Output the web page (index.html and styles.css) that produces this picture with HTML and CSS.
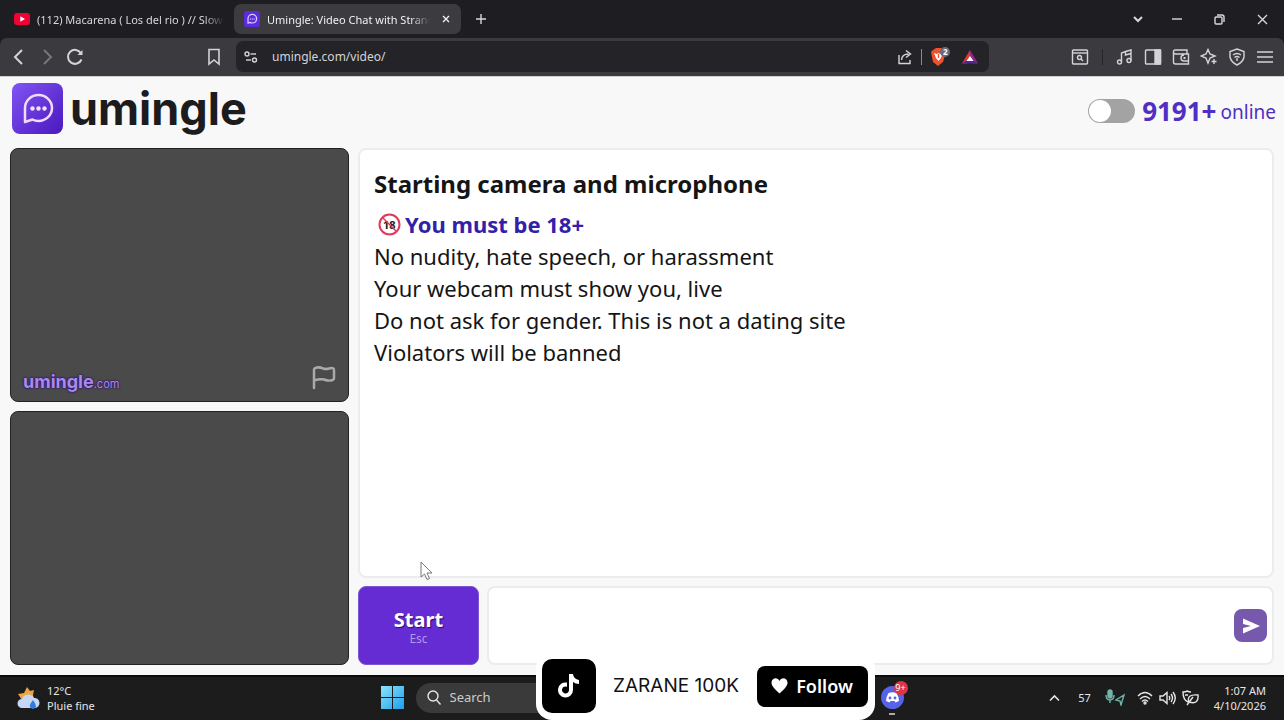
FILE: index.html
```html
<!DOCTYPE html>
<html lang="en">
<head>
  <meta charset="UTF-8" />
  <meta name="viewport" content="width=device-width, initial-scale=1.0"/>
  <title>Umingle: Video Chat with Strangers</title>
  <link rel="stylesheet" href="styles.css">
</head>
<body>
  <div class="tab-strip">
    <button class="tab">
      <svg width="16" height="12" viewBox="0 0 16 12"><rect width="16" height="12" rx="3" fill="#f00334"/><path d="M6.3 3.3v5.4L11 6z" fill="#fff"/></svg>
      <span class="tab-title">(112) Macarena ( Los del rio ) // Slowed</span>
    </button>
    <div class="tab active">
      <svg width="16" height="16" viewBox="0 0 52 52"><rect width="52" height="52" rx="9" fill="#5b2be0"/><path d="M13 40V25a14 14 0 1 1 14 14q-4 0-7-2z" fill="none" stroke="#dccfff" stroke-width="4" stroke-linejoin="round"/><path d="M19 26h16" stroke="#dccfff" stroke-width="4" stroke-dasharray="4 2"/></svg>
      <span class="tab-title">Umingle: Video Chat with Strangers</span>
      <button class="tab-close" aria-label="Close tab"><svg width="8" height="8" viewBox="0 0 8 8"><path d="M1 1l6 6M7 1L1 7"/></svg></button>
    </div>
    <button class="new-tab" aria-label="New tab"><svg width="10" height="10" viewBox="0 0 10 10"><path d="M5 0v10M0 5h10"/></svg></button>
    <div class="window-buttons">
      <button aria-label="Search tabs"><svg width="10" height="8" viewBox="0 0 10 8"><path d="M1 2l4 4 4-4" stroke-width="2"/></svg></button>
      <button aria-label="Minimize"><svg width="10" height="10" viewBox="0 0 10 10"><path d="M0 5h10"/></svg></button>
      <button aria-label="Restore"><svg width="11" height="11" viewBox="0 0 11 11"><rect x="1" y="3" width="7" height="7" rx="1"/><path d="M3 1h5q2 0 2 2v5"/></svg></button>
      <button aria-label="Close"><svg width="11" height="11" viewBox="0 0 11 11"><path d="M1 1l9 9M10 1l-9 9"/></svg></button>
    </div>
  </div>

  <div class="toolbar">
    <div class="nav-buttons">
      <button aria-label="Back"><svg width="18" height="18" viewBox="0 0 18 18"><path d="M12 2L5 9l7 7" stroke-width="2"/></svg></button>
      <button class="dim" aria-label="Forward"><svg width="18" height="18" viewBox="0 0 18 18"><path d="M6 2l7 7-7 7" stroke-width="2"/></svg></button>
      <button aria-label="Reload"><svg width="18" height="18" viewBox="0 0 18 18"><path d="M15.5 11.500A7 7 0 1 1 15 5.200" stroke-width="2"/><path d="M16.500 2v5h-5z" fill="currentColor" stroke="none"/></svg></button>
      <button class="bookmark" aria-label="Bookmark"><svg width="18" height="18" viewBox="0 0 18 18"><path d="M4 1.500h10v14.500l-5-4-5 4z" stroke-width="1.600"/></svg></button>
    </div>
    <div class="address">
      <svg width="14" height="14" viewBox="0 0 14 14"><circle cx="3" cy="4" r="2"/><path d="M6.500 4H12"/><circle cx="10.500" cy="10" r="2"/><path d="M2 10h5"/></svg>
      <input type="text" value="umingle.com/video/" aria-label="Address">
      <svg width="16" height="16" viewBox="0 0 16 16"><path d="M2 6v8.500h11V11M4.500 11q.5-6 7-6M9 1.500L13.500 5 9 8.500"/></svg>
      <span class="divider light"></span>
      <svg class="brave" width="20" height="22" viewBox="0 0 20 22"><path d="M3 4l3-2h5l3 2 2 2-3 10-5 4-5-4L1 6z" fill="#f0502b"/><path d="M4 7l3 1 1.500-1 1.500 1 3-1-2 5-2.500 3L6 12z" fill="#fff"/><path d="M8.500 8v4" stroke="#f0502b"/><circle cx="15" cy="6" r="5" fill="#676b7b"/><text x="13" y="9">2</text></svg>
      <svg class="bat" width="16" height="14" viewBox="0 0 16 14"><path d="M8 0L0 13.500h5L8 8z" fill="#e5362e"/><path d="M8 0l8 13.500h-5L8 8z" fill="#92278f"/><path d="M0 13.500h16l-5-3.500H5z" fill="#50268e"/><path d="M8 6l3.500 5h-7z" fill="#fff"/></svg>
    </div>
    <div class="extensions">
      <button aria-label="Search page"><svg width="18" height="18" viewBox="0 0 18 18"><rect x="1.500" y="2" width="15" height="14" rx="1"/><path d="M2 5h14"/><circle cx="8.500" cy="9.500" r="2"/><path d="M10 11l2 2"/></svg></button>
      <span class="divider"></span>
      <button aria-label="Playlist"><svg width="18" height="18" viewBox="0 0 18 18"><circle cx="3.500" cy="14" r="2"/><circle cx="13" cy="12.500" r="2"/><path d="M5.500 14V5l4-1.500V7L15 5.500M9.500 3.500L15 2v10.500"/></svg></button>
      <button aria-label="Sidebar"><svg width="18" height="18" viewBox="0 0 18 18"><rect x="1.500" y="2" width="15" height="14" rx="1"/><path d="M11 2h5.500v14H11z" fill="currentColor"/></svg></button>
      <button aria-label="Wallet"><svg width="18" height="18" viewBox="0 0 18 18"><path d="M15 6V2H3q-1.500 0-1.500 1.500V14q0 2 2 2h13v-3M1.500 4q0 2 2 2h13v7H12a3 3 0 0 1 0-6"/><path d="M11.500 10h2" stroke-width="2"/></svg></button>
      <button aria-label="Leo AI"><svg width="18" height="18" viewBox="0 0 18 18"><path d="M8 1.500l2 4.500 5 2-5 2-2 5-2-5-5-2 5-2zM14 11v5M11.500 13.500h5"/></svg></button>
      <button aria-label="VPN"><svg width="18" height="18" viewBox="0 0 18 18"><path d="M9 1l7 2.500V9q-1 5-7 8-6-3-7-8V3.500z"/><path d="M5 7q4-3 8 0M6.500 9.500q2.500-2 5 0M9 10v3"/></svg></button>
      <button aria-label="Menu"><svg width="18" height="18" viewBox="0 0 18 18"><path d="M1 4h16M1 9h16M1 14h16"/></svg></button>
    </div>
  </div>

  <div class="page">
    <header>
      <a href="#" class="logo">
        <svg width="51" height="51" viewBox="0 0 51 51">
          <defs><linearGradient id="logo-bg" x1="0" y1="0" x2="1" y2="1"><stop offset="0" stop-color="#8054f5"/><stop offset="1" stop-color="#4b18bd"/></linearGradient></defs>
          <rect width="51" height="51" rx="8" fill="url(#logo-bg)"/>
          <path d="M13 39V25a13.500 13 0 1 1 13.500 13q-3.500 0-6-1.500z" fill="none" stroke="#f3d9fb" stroke-width="2.500" stroke-linejoin="round"/>
          <g fill="#f3e0fb"><circle cx="20.500" cy="25.500" r="2.200"/><circle cx="26.500" cy="25.500" r="2.200"/><circle cx="32.500" cy="25.500" r="2.200"/></g>
        </svg>
        <span>umingle</span>
      </a>
      <label class="online" for="theme">
        <input type="checkbox" id="theme">
        <b>9191+</b>
        <span>online</span>
      </label>
    </header>

    <main>
      <div class="videos">
        <div class="video">
          <span class="watermark">umingle<small>.com</small></span>
          <button class="report" aria-label="Report"><svg width="26" height="26" viewBox="0 0 26 26"><path d="M3 23V5q0-2 3-2.500 3-.5 6 1 3 1 6 0 5-1.500 5 1.500v8q0 2-3 2.500-3 .5-7-1-4-1-10 1"/></svg></button>
        </div>
        <div class="video"></div>
      </div>

      <div class="chat">
        <div class="messages">
          <h2>Starting camera and microphone</h2>
          <p class="adult">
            <svg width="23" height="23" viewBox="0 0 23 23"><text x="5" y="16">18</text><circle cx="11.500" cy="11.500" r="10"/><path d="M5 5l13 13" stroke-width="1.500"/></svg>
            <span>You must be 18+</span>
          </p>
          <p>No nudity, hate speech, or harassment</p>
          <p>Your webcam must show you, live</p>
          <p>Do not ask for gender. This is not a dating site</p>
          <p>Violators will be banned</p>
          <svg class="pointer" width="13" height="20" viewBox="0 0 13 20"><path d="M1 1v15l3.500-3 2.500 5.500 2.500-1L7 12h5z"/></svg>
        </div>
        <div class="controls">
          <button class="start"><span>Start</span><small>Esc</small></button>
          <div class="composer">
            <textarea aria-label="Message"></textarea>
            <button class="send" aria-label="Send"><svg width="18" height="16" viewBox="0 0 18 16"><path d="M1 .5L18 8 1 15.500V10l8-2-8-2z"/></svg></button>
          </div>
        </div>
      </div>
    </main>
  </div>

  <div class="taskbar">
    <div class="weather">
      <svg width="24" height="24" viewBox="0 0 24 24"><path d="M10 1l3 4 4-1-1 5 1 5H5L1 8l6-1z" fill="#eda53d"/><path d="M5 22a4.500 4.500 0 0 1 0-9 6.500 6.500 0 0 1 12-1 5 5 0 0 1 1 10z" fill="#c5d6f8"/><path d="M16 14q-4 5-3 7 3 4 6 0 0-3-3-7z" fill="#2f7be0"/></svg>
      <div>12°C<br>Pluie fine</div>
    </div>
    <div class="apps">
      <button aria-label="Start menu"><svg width="23" height="23" viewBox="0 0 23 23"><defs><linearGradient id="win" x1="0" y1="0" x2="1" y2="1"><stop offset="0" stop-color="#8be6fb"/><stop offset="1" stop-color="#1d9eea"/></linearGradient></defs><path d="M0 0h11v11H0zM12 0h11v11H12zM0 12h11v11H0zM12 12h11v11H12z" fill="url(#win)"/></svg></button>
      <label class="search">
        <svg width="14" height="15" viewBox="0 0 14 15"><circle cx="6" cy="6" r="5"/><path d="M9.500 10l4 4.500"/></svg>
        <input type="text" placeholder="Search" aria-label="Search">
      </label>
      <button class="discord" aria-label="Discord">
        <svg width="23" height="23" viewBox="0 0 23 23"><circle cx="11.500" cy="11.500" r="11.500" fill="#5662e8"/><path d="M7.500 7q4-1.500 8 0 2.500 4 2.500 8l-3.500 1.500-1-1.500h-4l-1 1.500L5 15q0-4 2.500-8z" fill="#fff"/><circle cx="9" cy="12" r="1.400" fill="#5662e8"/><circle cx="14" cy="12" r="1.400" fill="#5662e8"/></svg>
        <span class="badge">9+</span>
      </button>
      <div class="follow-card">
        <span class="tiktok"><svg width="22" height="24" viewBox="0 0 22 24"><path d="M11 0h4q.5 5 6 6v4q-3.500 0-6-2v8A7.500 7.500 0 1 1 9 8.600v4.200A3.500 3.500 0 1 0 11 16z"/></svg></span>
        <span class="follow-name">ZARANE 100K</span>
        <button class="follow"><svg width="17" height="16" viewBox="0 0 17 16"><path d="M8.500 15.500Q1 9 .5 5.500C0 0 6.500-1.500 8.500 3c2-4.500 8.500-3 8 2.500Q16 9 8.500 15.500z"/></svg>Follow</button>
      </div>
    </div>
    <div class="tray">
      <svg width="11" height="8" viewBox="0 0 11 8"><path d="M1 6.500l4.500-4.500L10 6.500" stroke-width="1.600"/></svg>
      <span class="temp">57</span>
      <svg class="teal" width="20" height="17" viewBox="0 0 20 17"><rect x="3" y="1" width="4" height="8" rx="2" fill="currentColor"/><path d="M1 6q0 5 4 5 4 0 4-5M5 11v3M19 6l-8 5 4 1 1 4z"/></svg>
      <div class="status">
        <svg width="16" height="14" viewBox="0 0 16 14"><path d="M1 5q7-7 14 0M3 8q5-5 10 0M5 10.500q3-3 6 0"/><circle cx="8" cy="12" r="1"/></svg>
        <svg width="17" height="14" viewBox="0 0 17 14"><path d="M1 5h3l4-3.500v11L4 9H1zM10 5q1.500 2 0 4M12 3q3 4 0 8M14 1q4.500 6 0 12"/></svg>
        <svg width="17" height="16" viewBox="0 0 17 16"><path d="M6 12Q1 10 1 2q3 0 4-1 2 1 4 1M5 15l6-8M7 12q-3-8 9-7 1 10-9 7zM3 5h3"/></svg>
      </div>
      <div class="clock">1:07 AM<br>4/10/2026</div>
    </div>
  </div>
</body>
</html>
```
FILE: styles.css
```css
* {
  box-sizing: border-box;
}

body {
  margin: 0;
  min-height: 100vh;
  display: flex;
  flex-direction: column;
  background: #1e1e22;
  color: #151515;
  font-family: "Noto Sans", "Open Sans", sans-serif;
}

button,
input,
textarea {
  font: inherit;
  color: inherit;
  background: none;
  border: none;
  padding: 0;
  margin: 0;
}

button {
  display: flex;
  align-items: center;
  justify-content: center;
  cursor: pointer;
}

svg {
  display: block;
  flex: none;
}

/* browser tabs */
.tab-strip {
  display: flex;
  align-items: center;
  height: 38px;
  padding-left: 4px;
  color: #d8d8da;
  font-size: 11px;
}

.tab-strip button svg,
.toolbar svg,
.tray svg,
.search svg {
  fill: none;
  stroke: currentColor;
  stroke-width: 1.4;
}

.tab {
  display: flex;
  align-items: center;
  gap: 7px;
  width: 230px;
  height: 30px;
  padding: 0 10px;
  border-radius: 7px;
}

.tab > svg:first-child {
  stroke: none !important;
}

.tab.active {
  width: 227px;
  background: #3c3b40;
  color: #f0f0f0;
}

.tab-title {
  flex: 1;
  overflow: hidden;
  white-space: nowrap;
  text-align: left;
  mask-image: linear-gradient(to left, transparent, #000 20px);
}

.tab-close {
  width: 10px;
  height: 20px;
  margin-left: 4px;
}

.new-tab {
  width: 40px;
  height: 30px;
}

.window-buttons {
  display: flex;
  margin-left: auto;
}

.window-buttons button {
  width: 43px;
  height: 38px;
}

.window-buttons button:first-child {
  width: 34px;
}

/* browser toolbar */
.toolbar {
  display: flex;
  align-items: center;
  height: 38px;
  padding: 0 5px 1px;
  background: #3b3a3e;
  border-radius: 7px 7px 0 0;
  color: #d4d4d6;
}

.toolbar button {
  width: 28px;
  height: 28px;
}

.nav-buttons {
  display: flex;
  width: 231px;
}

.nav-buttons .bookmark {
  margin: 0 8px 0 auto;
}

.toolbar .dim {
  color: #77767a;
}

.address {
  flex: 1;
  display: flex;
  align-items: center;
  gap: 8px;
  height: 31px;
  padding: 0 11px 0 8px;
  background: #242428;
  border-radius: 7px;
}

.address input {
  flex: 1;
  margin-left: 6px;
  font-size: 12px;
  outline: none;
}

.divider {
  width: 1px;
  height: 16px;
  margin: 0 8px;
  background: #26262a;
}

.divider.light {
  margin: 0;
  background: #8c8c90;
}

.address .brave,
.address .bat {
  stroke: none;
}

.brave text {
  font-size: 8px;
  font-weight: bold;
  fill: #fff;
}

.bat {
  margin-left: 4px;
}

.extensions {
  display: flex;
  align-items: center;
  justify-content: flex-end;
  width: 290px;
}

/* site */
.page {
  flex: 1;
  display: flex;
  flex-direction: column;
  padding: 0 10px 10px;
  background: #f8f8f8;
  border-top: 1px solid #cfcfcf;
}

header {
  display: flex;
  align-items: center;
  justify-content: space-between;
  height: 71px;
  padding: 0 0 8px 2px;
}

.logo {
  display: flex;
  align-items: center;
  gap: 7px;
  color: #1c1c1e;
  font: 700 45px/51px Inter, sans-serif;
  text-decoration: none;
}

.online {
  display: flex;
  align-items: center;
  gap: 7px;
  margin-right: -2px;
  padding-top: 4px;
  color: #4f2fc4;
  font-size: 19px;
}

.online b {
  font-size: 26px;
  line-height: 32px;
}

.online span {
  margin-left: -3px;
  padding-top: 2px;
}

.online input {
  appearance: none;
  width: 47px;
  height: 24px;
  padding: 1px;
  background: #a3a3a3;
  border-radius: 12px;
}

.online input::before {
  content: "";
  display: block;
  width: 22px;
  height: 22px;
  border-radius: 50%;
  background: #fff;
}

.online input:checked::before {
  margin-left: auto;
}

main {
  flex: 1;
  display: grid;
  grid-template-columns: 339px 1fr;
  gap: 9px;
}

.videos {
  display: grid;
  grid-template-rows: 1fr 1fr;
  gap: 9px;
}

.video {
  display: flex;
  align-items: flex-end;
  justify-content: space-between;
  padding: 8px 11px 7px 12px;
  background: #4a4a4a;
  border: 1px solid #222;
  border-radius: 8px;
}

.watermark {
  color: #a98ae8;
  font: 700 18px/20px Inter, sans-serif;
  text-shadow: 0 0 2px #2a0a78, 0 0 2px #2a0a78;
}

.watermark small {
  font-size: 11px;
  font-weight: 400;
}

.report {
  padding-bottom: 3px;
}

.report svg {
  fill: none;
  stroke: #a9a9a9;
  stroke-width: 2.5;
  stroke-linejoin: round;
  stroke-linecap: round;
}

.chat {
  display: flex;
  flex-direction: column;
  gap: 8px;
}

.messages,
.composer {
  background: #fff;
  border: 2px solid #ececec;
  border-radius: 8px;
}

.messages {
  position: relative;
  flex: 1;
  padding: 18px 14px;
  font-size: 22px;
  line-height: 32px;
}

.messages h2 {
  margin: 0 0 8px;
  font-size: 24px;
}

.messages p {
  margin: 0;
}

.adult {
  display: flex;
  align-items: center;
  gap: 4px;
  padding-left: 4px;
  color: #3420a8;
  font-weight: bold;
}

.adult svg {
  fill: none;
  stroke: #dc3b5c;
  stroke-width: 2;
}

.adult text {
  font-size: 11px;
  fill: #222;
  stroke: none;
}

.pointer {
  position: absolute;
  left: 60px;
  bottom: -5px;
  fill: #fff;
  stroke: #777;
}

.controls {
  display: flex;
  gap: 8px;
  height: 79px;
}

.start {
  flex-direction: column;
  width: 121px;
  background: #652cd3;
  border: 1px solid #7c55d4;
  border-radius: 8px;
  color: #fff;
  font-size: 20px;
  font-weight: bold;
  line-height: 22px;
  text-shadow: 1px 1px 1px #2a0a78;
  padding-top: 4px;
}

.start small {
  color: #b496f0;
  font-size: 12px;
  font-weight: normal;
  line-height: 16px;
  text-shadow: none;
}

.composer {
  flex: 1;
  display: flex;
  align-items: center;
  padding: 5px;
}

.composer textarea {
  flex: 1;
  height: 100%;
  resize: none;
  outline: none;
}

.send {
  width: 33px;
  height: 33px;
  background: #7659ad;
  border-radius: 8px;
  fill: #fff;
}

/* desktop taskbar */
.taskbar {
  display: grid;
  grid-template-columns: 1fr 523px 1fr;
  align-items: center;
  height: 45px;
  padding-bottom: 2px;
  background: #1c1c1c;
  border-top: 2px solid #0c0c0c;
  color: #e6e6e6;
  font-size: 11px;
  line-height: 15px;
}

.weather {
  display: flex;
  align-items: center;
  gap: 6px;
  padding-left: 17px;
}

.apps {
  position: relative;
  display: flex;
  align-items: center;
  height: 41px;
}

.search {
  display: flex;
  align-items: center;
  gap: 9px;
  width: 180px;
  height: 30px;
  margin-left: 12px;
  padding-left: 11px;
  background: #3a3a3a;
  border-radius: 15px;
}

.search input {
  width: 120px;
  font-size: 13px;
}

.search input::placeholder {
  color: #ccc;
}

.discord {
  position: relative;
  margin-left: auto;
}

.discord::after {
  content: "";
  position: absolute;
  bottom: -6px;
  width: 6px;
  height: 2px;
  background: #aaa;
}

.badge {
  position: absolute;
  top: -5px;
  right: -4px;
  width: 14px;
  height: 14px;
  border-radius: 50%;
  background: #dc3545;
  color: #fff;
  font-size: 9px;
  line-height: 14px;
}

.follow-card {
  position: absolute;
  left: 155px;
  bottom: -2px;
  display: flex;
  align-items: center;
  width: 339px;
  height: 68px;
  padding: 0 7px 0 6px;
  background: #fff;
  border-radius: 16px;
  color: #111;
}

.tiktok {
  display: flex;
  align-items: center;
  justify-content: center;
  width: 54px;
  height: 54px;
  background: #000;
  border-radius: 10px;
  fill: #fff;
}

.follow-name {
  flex: 1;
  text-align: center;
  font: 19px/24px Inter, sans-serif;
}

.follow {
  gap: 8px;
  width: 111px;
  height: 41px;
  background: #000;
  border-radius: 8px;
  color: #fff;
  fill: #fff;
  font-size: 18px;
  font-weight: 600;
}

.tray {
  display: flex;
  align-items: center;
  justify-content: flex-end;
  padding-right: 18px;
}

.temp {
  margin: 0 14px 0 18px;
}

.teal {
  color: #72b5ac;
}

.status {
  display: flex;
  align-items: center;
  gap: 6px;
  margin: 0 15px 0 12px;
}

.clock {
  text-align: right;
}
```
